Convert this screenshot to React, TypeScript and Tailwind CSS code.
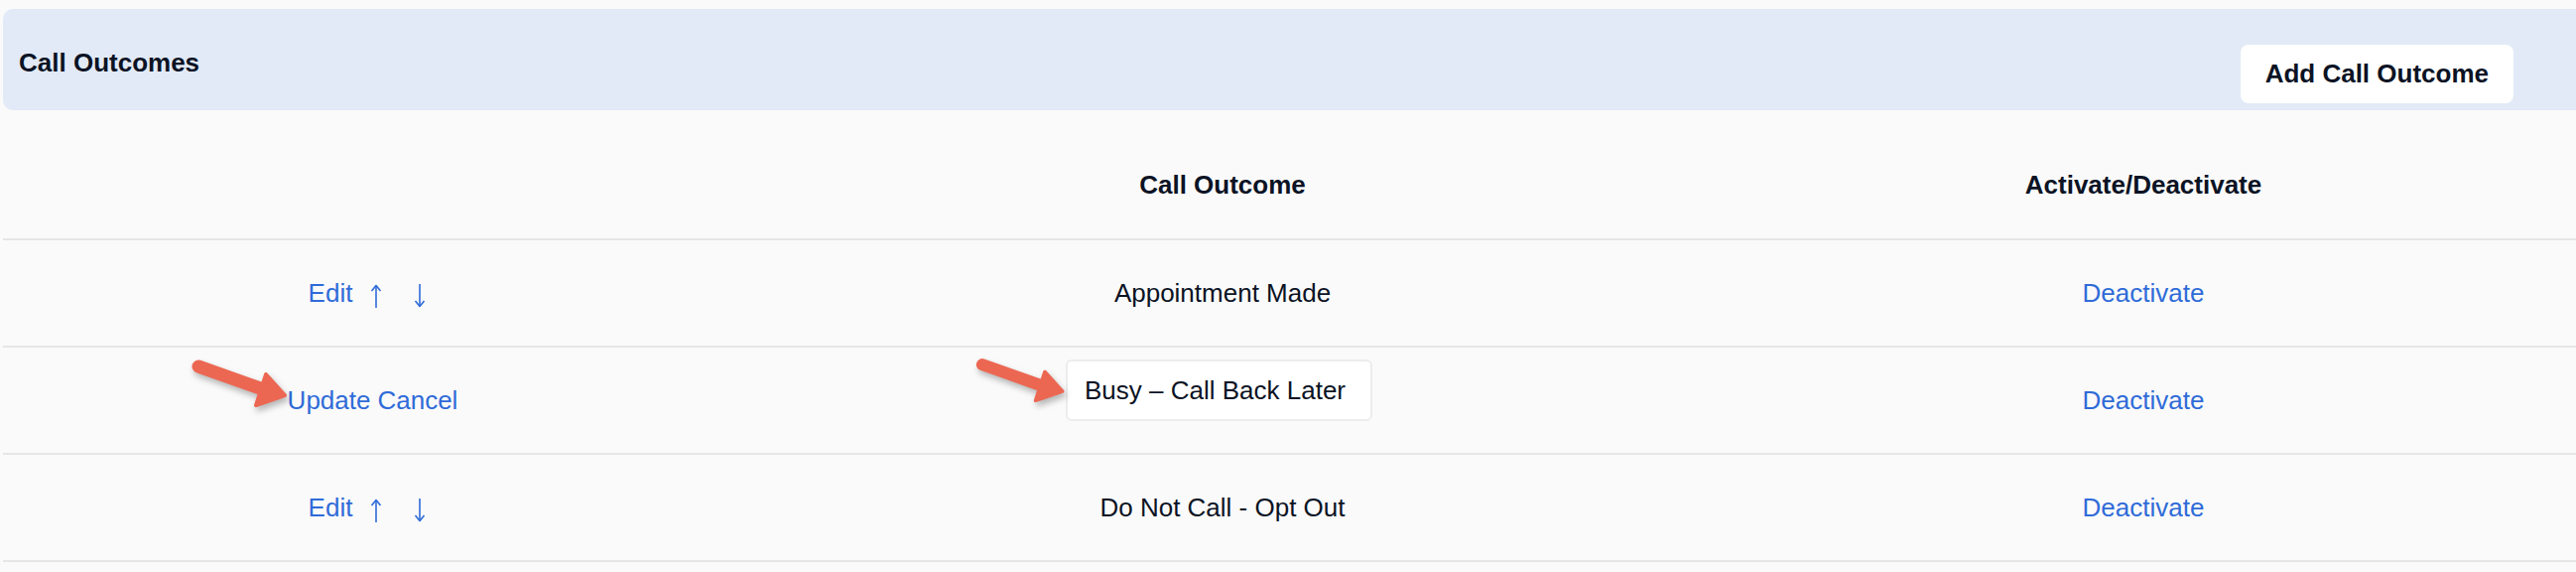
import { useState } from "react";

type Outcome = { id: number; name: string; active: boolean };

const initialOutcomes: Outcome[] = [
  { id: 1, name: "Appointment Made", active: true },
  { id: 2, name: "Busy – Call Back Later", active: true },
  { id: 3, name: "Do Not Call - Opt Out", active: true },
];

// red callout arrow drawn on top of the screenshot
function CalloutArrow({ className }: { className: string }) {
  return (
    <svg
      className={`pointer-events-none absolute drop-shadow-[2px_4px_3px_rgba(0,0,0,0.28)] ${className}`}
      viewBox="0 0 110 60"
    >
      <line x1="15" y1="14" x2="80" y2="37" stroke="#ec6752" strokeWidth="13" strokeLinecap="round" />
      <polygon points="83,22 102,43 73,53" fill="#ec6752" stroke="#ec6752" strokeWidth="4" strokeLinejoin="round" />
    </svg>
  );
}

function MoveArrow({ up }: { up?: boolean }) {
  return (
    <svg viewBox="0 0 12 24" className={`h-[24px] w-[12px] ${up ? "" : "rotate-180"}`} fill="none" stroke="currentColor">
      <path d="M6 1.5V24" strokeWidth="1.6" />
      <path d="M1.5 7L6 1.5L10.5 7" strokeWidth="1.6" strokeLinejoin="round" />
    </svg>
  );
}

export default function App() {
  const [outcomes] = useState<Outcome[]>(initialOutcomes);
  const editingId = 2;

  return (
    <div className="relative min-h-screen bg-[#fafafa] font-['Liberation_Sans',Arial,sans-serif] text-[#0b1324]">
      <div className="pl-[3px] pt-[9px]">
        <div className="flex h-[102px] justify-between rounded-l-[10px] bg-[#e2eaf7] pl-[16px] pr-[63px]">
          <h2 className="mt-[6px] self-center text-[26px] font-bold leading-[29px]">Call Outcomes</h2>
          <button className="mb-[7px] h-[59px] self-end rounded-[8px] bg-white px-[25px] text-[26px] font-bold leading-[29px]">
            Add Call Outcome
          </button>
        </div>
      </div>

      <div className="ml-[3px]">
        <div className="grid grid-cols-[737px_984px_1fr] border-b-2 border-[#e6e6e6] pb-[39px] pt-[61px] text-center text-[26px] font-bold leading-[29px]">
          <div />
          <div>Call Outcome</div>
          <div>Activate/Deactivate</div>
        </div>

        {outcomes.map((outcome) => (
          <div
            key={outcome.id}
            className="grid h-[108px] grid-cols-[737px_984px_1fr] items-center border-b-2 border-[#e6e6e6] text-center text-[26px] leading-[29px]"
          >
            <div className="flex justify-center text-[#2f6bd8]">
              {outcome.id === editingId ? (
                <div className="ml-[8px] flex gap-[7px]">
                  <button>Update</button>
                  <button>Cancel</button>
                </div>
              ) : (
                <div className="mr-[3px] flex items-center">
                  <button>Edit</button>
                  <button className="ml-[18px] mt-[6px]" aria-label="Move up">
                    <MoveArrow up />
                  </button>
                  <button className="ml-[32px] mt-[6px]" aria-label="Move down">
                    <MoveArrow />
                  </button>
                </div>
              )}
            </div>
            <div className="flex justify-center">
              {outcome.id === editingId ? (
                <input
                  readOnly
                  defaultValue={outcome.name}
                  className="mb-[20px] mr-[7px] h-[62px] w-[309px] rounded-[6px] border-2 border-[#ececec] bg-white pl-[17px] text-[26px] text-[#0b1324] outline-none"
                />
              ) : (
                <span>{outcome.name}</span>
              )}
            </div>
            <div className="text-[#2f6bd8]">
              <button>{outcome.active ? "Deactivate" : "Activate"}</button>
            </div>
          </div>
        ))}
      </div>

      <CalloutArrow className="left-[185px] top-[355px] h-[60px] w-[110px]" />
      <CalloutArrow className="left-[976px] top-[354px] h-[56px] w-[102px]" />
    </div>
  );
}
